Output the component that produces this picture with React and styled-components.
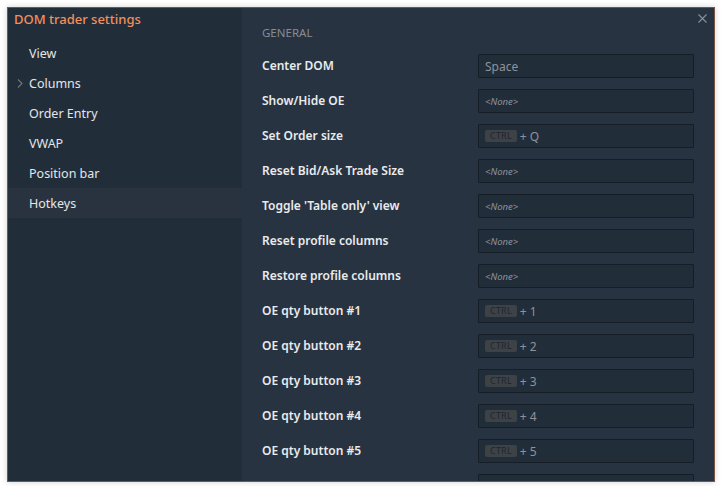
import React from "react";
import styled, { createGlobalStyle } from "styled-components";

const Global = createGlobalStyle`
  html, body { margin: 0; padding: 0; background: #ffffff; }
  body { font-family: "Noto Sans", "Open Sans", sans-serif; }
  #root { padding: 7px; }
`;

const Dialog = styled.div`
  width: 708px;
  height: 475px;
  box-sizing: border-box;
  border: 1px solid #7b5443;
  box-shadow: 0 0 6px rgba(0, 0, 0, 0.18);
  display: flex;
  overflow: hidden;
  position: relative;
`;

const Sidebar = styled.div`
  width: 234px;
  flex: none;
  background: #222d3a;
  display: flex;
  flex-direction: column;
`;

const Title = styled.div`
  color: #f28f5b;
  font-size: 13px;
  font-weight: 500;
  height: 22px;
  line-height: 22px;
  padding: 0 0 0 6px;
  margin-bottom: 8px;
`;

const NavItem = styled.div`
  height: 30px;
  display: flex;
  align-items: center;
  padding-left: 21px;
  position: relative;
  color: #e4e6e8;
  font-size: 12.5px;
  background: ${(p) => (p.$active ? "#29333f" : "transparent")};
`;

const Chevron = styled.svg`
  position: absolute;
  left: 9px;
  top: 11px;
`;

const Main = styled.div`
  flex: 1;
  background: #283341;
  padding: 15px 20px 0 20px;
  position: relative;
`;

const Close = styled.svg`
  position: absolute;
  right: 7px;
  top: 6px;
`;

const Section = styled.div`
  color: #868c93;
  font-size: 11.5px;
  text-transform: uppercase;
  height: 20px;
  line-height: 20px;
  margin-bottom: 11px;
`;

const Rows = styled.div`
  display: flex;
  flex-direction: column;
  gap: 11px;
`;

const Row = styled.div`
  display: grid;
  grid-template-columns: 1fr 216px;
  align-items: center;
`;

const Label = styled.div`
  color: #e9ebed;
  font-size: 12px;
  font-weight: 600;
  padding-bottom: 2px;
`;

const Input = styled.div`
  height: 24px;
  box-sizing: border-box;
  background: #222d3a;
  border: 1px solid #151d27;
  border-radius: 1px;
  display: flex;
  align-items: center;
  padding-left: 6px;
  gap: 3px;
  color: #8d939a;
  font-size: ${(p) => (p.$placeholder ? "9.5px" : "12px")};
  font-style: ${(p) => (p.$placeholder ? "italic" : "normal")};
`;

const Key = styled.span`
  background: #3d4247;
  color: #20262c;
  font-size: 9px;
  border-radius: 2px;
  height: 12px;
  line-height: 12px;
  padding: 0 5px;
  letter-spacing: 0.2px;
`;

const nav = ["View", "Columns", "Order Entry", "VWAP", "Position bar", "Hotkeys"];

const rows = [
  ["Center DOM", { text: "Space" }],
  ["Show/Hide OE", null],
  ["Set Order size", { key: "Q" }],
  ["Reset Bid/Ask Trade Size", null],
  ["Toggle 'Table only' view", null],
  ["Reset profile columns", null],
  ["Restore profile columns", null],
  ["OE qty button #1", { key: "1" }],
  ["OE qty button #2", { key: "2" }],
  ["OE qty button #3", { key: "3" }],
  ["OE qty button #4", { key: "4" }],
  ["OE qty button #5", { key: "5" }],
  ["", { empty: true }],
];

function Value({ v }) {
  if (!v) return <Input $placeholder>&lt;None&gt;</Input>;
  if (v.empty) return <Input />;
  if (v.text) return <Input>{v.text}</Input>;
  return (
    <Input>
      <Key>CTRL</Key>+ {v.key}
    </Input>
  );
}

export default function App() {
  return (
    <>
      <Global />
      <Dialog>
        <Sidebar>
          <Title>DOM trader settings</Title>
          {nav.map((n) => (
            <NavItem key={n} $active={n === "Hotkeys"}>
              {n === "Columns" && (
                <Chevron width="6" height="9" viewBox="0 0 6 9">
                  <path d="M1 0.5 L5 4.5 L1 8.5" fill="none" stroke="#6f767e" strokeWidth="1.1" />
                </Chevron>
              )}
              {n}
            </NavItem>
          ))}
        </Sidebar>
        <Main>
          <Close width="9" height="9" viewBox="0 0 9 9">
            <path d="M0.5 0.5 L8.5 8.5 M8.5 0.5 L0.5 8.5" stroke="#8a9098" strokeWidth="1.1" />
          </Close>
          <Section>General</Section>
          <Rows>
            {rows.map(([l, v], i) => (
              <Row key={i}>
                <Label>{l}</Label>
                <Value v={v} />
              </Row>
            ))}
          </Rows>
        </Main>
      </Dialog>
    </>
  );
}
